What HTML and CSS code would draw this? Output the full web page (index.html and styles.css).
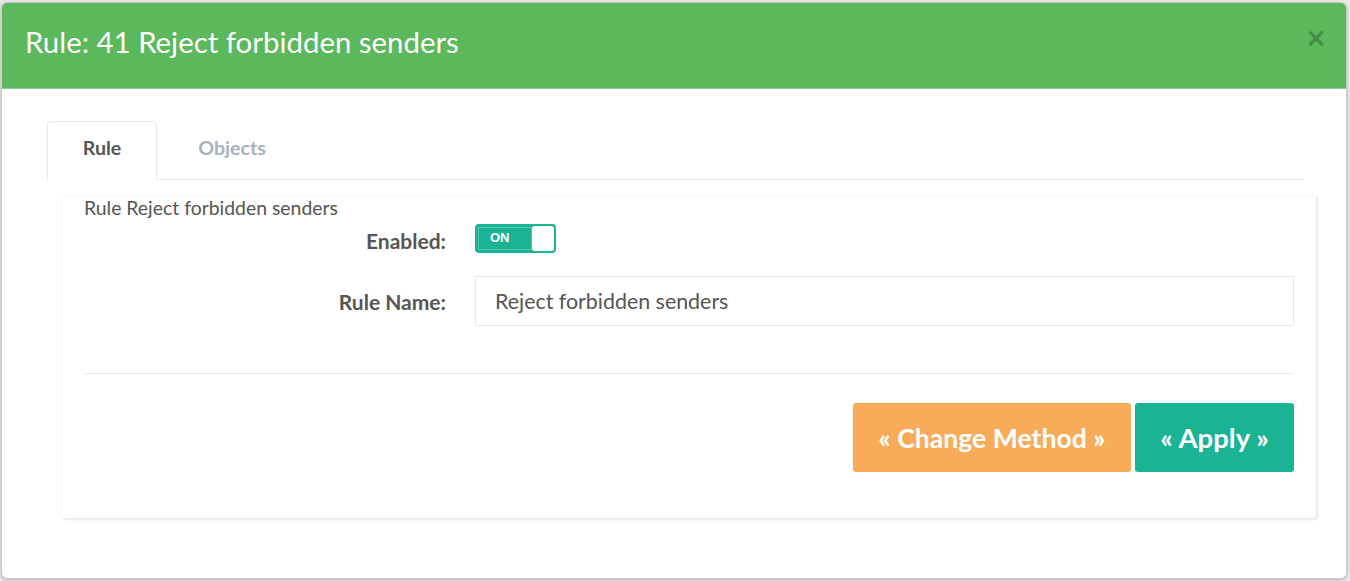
FILE: index.html
```html
<!DOCTYPE html>
<html>
<head>
<meta charset="utf-8">
<link rel="stylesheet" href="styles.css">
</head>
<body>
<div class="backdrop">
  <div class="modal">
    <div class="modal-header">
      <h4 class="modal-title">Rule: 41 Reject forbidden senders</h4>
      <span class="close">×</span>
    </div>
    <div class="modal-body">
      <ul class="tabs">
        <li class="tab active">Rule</li>
        <li class="tab">Objects</li>
      </ul>
      <div class="panel">
        <p class="caption">Rule Reject forbidden senders</p>
        <div class="form-row">
          <label class="label">Enabled:</label>
          <div class="control">
            <div class="switch">
              <span class="switch-on">ON</span>
              <span class="switch-knob"></span>
            </div>
          </div>
        </div>
        <div class="form-row row-name">
          <label class="label">Rule Name:</label>
          <div class="control">
            <div class="input">Reject forbidden senders</div>
          </div>
        </div>
        <div class="divider"></div>
        <div class="actions">
          <button class="btn btn-warning">« Change Method »</button>
          <button class="btn btn-primary">« Apply »</button>
        </div>
      </div>
    </div>
  </div>
</div>
</body>
</html>
```

FILE: styles.css
```css
* { box-sizing: border-box; }
html, body { margin: 0; padding: 0; }
body {
  background: #e9e9ea;
  font-family: Lato, "Open Sans", "Liberation Sans", sans-serif;
  color: #676a6c;
}
.backdrop {
  width: 1350px;
  height: 581px;
  padding: 2px 3px 2px 1px;
}
.modal {
  height: 577px;
  background: #fff;
  border: 1px solid #c9c9c9;
  border-radius: 6px;
  overflow: hidden;
  box-shadow: 0 1px 3px rgba(0,0,0,0.25);
  display: flex;
  flex-direction: column;
}
.modal-header {
  background: #5cb85c;
  height: 86px;
  border-bottom: 1px solid #8fce8f;
  display: flex;
  align-items: center;
  justify-content: space-between;
  padding: 0 21px 6px 23px;
}
.modal-title {
  margin: 0;
  color: #fff;
  font-size: 29.4px;
  font-weight: 400;
  line-height: 1.1;
}
.close {
  color: rgba(0,0,0,0.22);
  font-size: 31px;
  font-weight: 700;
  line-height: 1;
  margin-top: -8px;
  font-family: "Liberation Sans", sans-serif;
}
.modal-body {
  padding: 32px 42px 0 45px;
}
.tabs {
  list-style: none;
  margin: 0;
  padding: 0;
  display: flex;
  border-bottom: 1px solid #e7eaec;
  height: 59px;
}
.tab {
  height: 59px;
  padding: 0 0 6px;
  display: flex;
  align-items: center;
  justify-content: center;
  font-size: 19.6px;
  font-weight: 700;
  color: #a7b1c2;
  border: 1px solid transparent;
  border-radius: 4px 4px 0 0;
  width: 150px;
}
.tab.active {
  width: 110px;
  color: #555;
  border-color: #e7eaec;
  border-bottom-color: #fff;
  margin-bottom: -1px;
  background: #fff;
}
.panel {
  margin: 16px -12px 0 15px;
  height: 322px;
  padding: 2px 22px 0 22px;
  border-radius: 3px;
  box-shadow: 1px 1px 2px 1px rgba(0,0,0,0.09);
}
.caption {
  margin: 0;
  font-size: 19.4px;
  line-height: 20px;
  color: #555;
  font-weight: 400;
}
.form-row {
  display: grid;
  grid-template-columns: 362px 1fr;
  column-gap: 29px;
  align-items: center;
  margin-top: 6px;
}
.row-name { margin-top: 23px; }
.label {
  text-align: right;
  font-size: 21px;
  font-weight: 700;
  color: #555;
  padding-top: 3px;
}
.row-name .label { padding-top: 1px; }
.switch {
  width: 81px;
  height: 29px;
  border: 2px solid #1ab394;
  border-radius: 4px;
  background: #1ab394;
  display: flex;
  align-items: stretch;
}
.switch-on {
  flex: 1;
  color: #fff;
  font-size: 13px;
  font-weight: 700;
  font-family: "Liberation Sans", Arial, sans-serif;
  display: flex;
  align-items: center;
  padding-left: 11px;
  padding-bottom: 3px;
  border: 1px solid rgba(255,255,255,0.25);
  margin: 1px 0 1px 1px;
}
.switch-knob {
  width: 22px;
  background: #fff;
  border-radius: 3px;
}
.input {
  height: 50px;
  border: 1px solid #e5e6e7;
  padding: 0 19px;
  display: flex;
  align-items: center;
  font-size: 21.4px;
  color: #555;
}
.divider {
  margin-top: 47px;
  border-top: 1px solid #e7eaec;
}
.actions {
  margin-top: 29px;
  display: flex;
  justify-content: flex-end;
  gap: 4px;
}
.btn {
  height: 69px;
  border: none;
  border-radius: 3px;
  color: #fff;
  font-family: Lato, "Open Sans", sans-serif;
  font-size: 26.6px;
  font-weight: 700;
  padding: 0;
}
.btn-warning { background: #f8ac59; width: 278px; }
.btn-primary { background: #1ab394; width: 159px; font-size: 27.5px; }
```
